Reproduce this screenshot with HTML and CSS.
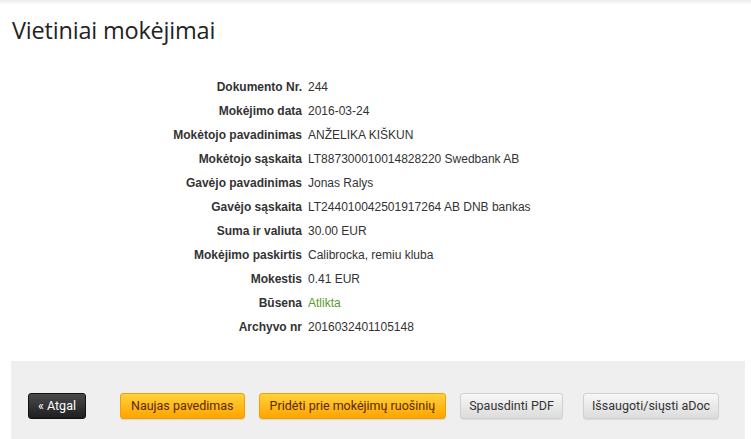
FILE: index.html
```html
<!DOCTYPE html>
<html lang="lt">
<head>
    <meta charset="UTF-8">
    <title>Vietiniai mokėjimai</title>
    <link rel="stylesheet" href="styles.css">
</head>
<body>
    <div class="topshade"></div>
    <div class="page">
        <h1>Vietiniai mokėjimai</h1>
        <div class="details">
            <div class="label">Dokumento Nr.</div><div class="value">244</div>
            <div class="label">Mokėjimo data</div><div class="value">2016-03-24</div>
            <div class="label">Mokėtojo pavadinimas</div><div class="value">ANŽELIKA KIŠKUN</div>
            <div class="label">Mokėtojo sąskaita</div><div class="value">LT887300010014828220 Swedbank AB</div>
            <div class="label">Gavėjo pavadinimas</div><div class="value">Jonas Ralys</div>
            <div class="label">Gavėjo sąskaita</div><div class="value">LT244010042501917264 AB DNB bankas</div>
            <div class="label">Suma ir valiuta</div><div class="value">30.00 EUR</div>
            <div class="label">Mokėjimo paskirtis</div><div class="value">Calibrocka, remiu kluba</div>
            <div class="label">Mokestis</div><div class="value">0.41 EUR</div>
            <div class="label">Būsena</div><div class="value status">Atlikta</div>
            <div class="label">Archyvo nr</div><div class="value">2016032401105148</div>
        </div>
        <div class="actions">
            <a class="btn btn-dark" href="#">« Atgal</a>
            <a class="btn btn-orange" href="#">Naujas pavedimas</a>
            <a class="btn btn-orange" href="#">Pridėti prie mokėjimų ruošinių</a>
            <a class="btn btn-grey" href="#">Spausdinti PDF</a>
            <a class="btn btn-grey btn-wide" href="#">Išsaugoti/siųsti aDoc</a>
        </div>
    </div>
</body>
</html>
```
FILE: styles.css
```css
body {
    margin: 0;
    background: #fff;
    font-family: "Liberation Sans", Arial, sans-serif;
    color: #333;
}

.topshade {
    height: 5px;
    background: linear-gradient(#ececec, #fff);
}

.page {
    padding: 0 6px 0 11px;
}

h1 {
    margin: 9px 0 0 1px;
    font-family: "Open Sans", sans-serif;
    font-weight: normal;
    font-size: 23.5px;
    letter-spacing: -0.2px;
    color: #222;
    line-height: 32px;
}

.details {
    display: grid;
    grid-template-columns: 291px 1fr;
    column-gap: 6px;
    margin-top: 29px;
    font-size: 12px;
}

.details .label,
.details .value {
    line-height: 24px;
}

.label {
    text-align: right;
    font-weight: bold;
    color: #333;
}

.value {
    color: #333;
}

.status {
    color: #5a9a2a;
}

.actions {
    margin-top: 22px;
    background: #efefef;
    height: 82px;
    display: flex;
    align-items: center;
    gap: 14px;
    padding: 8px 0 0 17px;
    box-sizing: border-box;
}

.btn {
    display: inline-block;
    height: 26px;
    line-height: 24px;
    padding: 0 10px;
    border-radius: 3px;
    font-family: Roboto, sans-serif;
    font-size: 12.5px;
    text-decoration: none;
    box-sizing: border-box;
}

.btn-dark {
    background: linear-gradient(#4a4a4a, #1e1e1e);
    color: #fff;
    border: 1px solid #111;
    padding: 0 9px;
    margin-right: 20px;
}

.btn-orange {
    background: linear-gradient(#ffd23a, #ffa400);
    color: #5a2a00;
    border: 1px solid #f0a000;
    box-shadow: 0 1px 1px rgba(0, 0, 0, 0.1);
}

.btn-grey {
    background: linear-gradient(#f7f7f7, #dcdcdc);
    color: #333;
    border: 1px solid #d0d0d0;
    padding: 0 8px;
    box-shadow: 0 1px 1px rgba(0, 0, 0, 0.08);
}

.btn-wide {
    margin-left: 6px;
}
```
